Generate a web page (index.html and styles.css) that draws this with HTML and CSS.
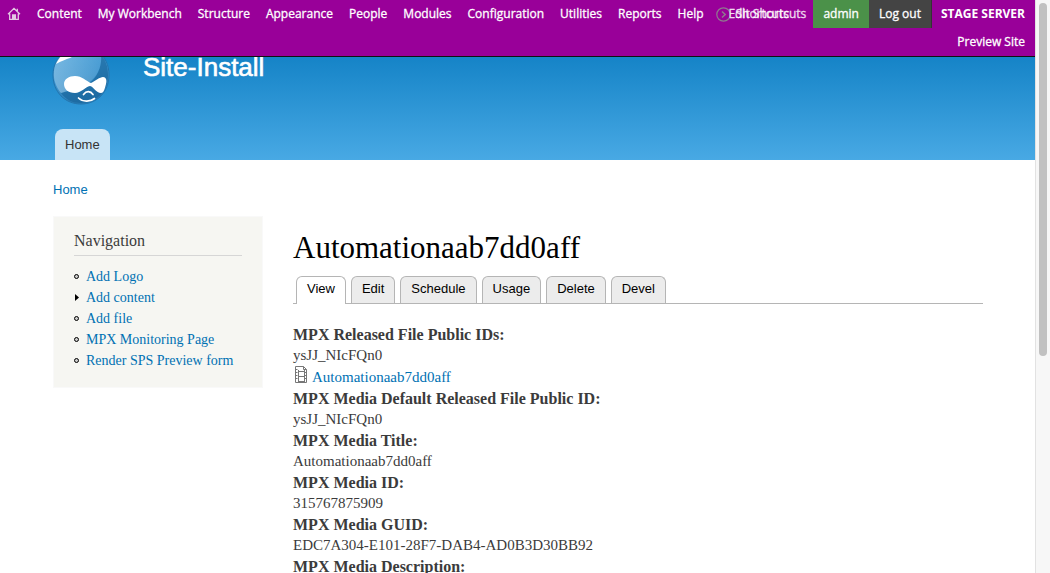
FILE: index.html
```html
<!DOCTYPE html>
<html lang="en">
<head>
<meta charset="utf-8">
<title>Automationaab7dd0aff | Site-Install</title>
<link rel="stylesheet" href="styles.css">
</head>
<body>
<div class="window">
  <div class="page">
    <nav class="toolbar" aria-label="Administration">
      <ul class="toolbar-menu">
        <li><a class="toolbar-home" href="#" aria-label="Administration home">
          <svg width="14" height="14" viewBox="0 0 14 14" fill="none" stroke="#e3c8e3" stroke-width="1.3"><path d="M1 7.2 7 1.4l6 5.800M2.700 6.500v5.800h8.600V6.500M10.300 4V1.700"/><path d="M5.600 12V8h2.800v4" fill="#e3c8e3"/></svg>
        </a></li>
        <li><a href="#">Content</a></li>
        <li><a href="#">My Workbench</a></li>
        <li><a href="#">Structure</a></li>
        <li><a href="#">Appearance</a></li>
        <li><a href="#">People</a></li>
        <li><a href="#">Modules</a></li>
        <li><a href="#">Configuration</a></li>
        <li><a href="#">Utilities</a></li>
        <li><a href="#">Reports</a></li>
        <li><a href="#">Help</a></li>
      </ul>
      <div class="shortcuts">
        <svg width="15" height="15" viewBox="0 0 15 15" fill="none" stroke="#8f7a8f" stroke-width="1.2"><circle cx="7.5" cy="7.5" r="6.7"/><path d="m6 4.500 3.200 3L6 10.500" stroke-width="1.5"/></svg>
        <a class="shortcuts-edit" href="#">Edit Shortcuts</a>
        <a class="shortcuts-toggle" href="#">Shortcuts</a>
      </div>
      <a class="account" href="#">admin</a>
      <a class="logout" href="#">Log out</a>
      <div class="environment">
        <strong>STAGE SERVER</strong>
        <a href="#">Preview Site</a>
      </div>
    </nav>

    <header class="header">
      <div class="branding">
        <a href="#" aria-label="Site home"><svg class="logo" width="58" height="67" viewBox="0 0 58 67">
          <defs>
            <linearGradient id="drop" x1="0" y1="0" x2=".3" y2="1"><stop offset=".2" stop-color="#5aaadd"/><stop offset=".65" stop-color="#3b94cf"/><stop offset="1" stop-color="#2a7db6"/></linearGradient>
            <linearGradient id="shine" x1="1" y1="0" x2="0" y2="1"><stop offset="0" stop-color="#fff" stop-opacity="0"/><stop offset="1" stop-color="#fff" stop-opacity=".32"/></linearGradient>
          </defs>
          <path d="M28 1c4 6 11 8 17 12 8 5 12 14 12 24 0 17-12 29-28 29S1 54 1 37c0-10 5-18 12-23C19 10 25 7 28 1Z" fill="url(#drop)" stroke="#2374ad"/>
          <path d="M49 17c1 9-2 19-9 26-7 6-17 9-31 12 5 7 12 10 20 10 16 0 27-12 27-28 0-8-2-15-7-20Z" fill="#166196" opacity=".6"/>
          <path d="M2 33c1-11 8-18 14-21 11-4 24-4 33 4 1 10-2 19-9 26-8 7-18 9-31 13-5-6-8-14-7-22Z" fill="url(#shine)"/>
          <path d="M4 26c3-6 7-11 12-13h10c-2 7-12 7-22 13Z" fill="#fff"/>
          <path d="M23 38c7 0 11 5 16 7 4-2 9-6 12-6 3 0 4 3 3 7s-2 9-5 9c-5 0-7-6-11-7-5 1-9 7-15 7-7 0-11-4-11-9s5-8 11-8Z" fill="#fff"/>
          <path d="M31.500 56.500c3-4 7-3.500 9.500 0M26.500 60c4 4 12 4 16 .5" fill="none" stroke="#fff" stroke-width="1.700" stroke-linecap="round"/>
        </svg></a>
        <a class="site-name" href="#">Site-Install</a>
      </div>
      <nav class="main-menu" aria-label="Main menu"><a href="#">Home</a></nav>
    </header>

    <div class="body-area">
      <nav class="breadcrumb" aria-label="Breadcrumb"><a href="#">Home</a></nav>
      <div class="columns">
        <aside class="sidebar">
          <h2>Navigation</h2>
          <ul class="nav-list">
            <li><a href="#">Add Logo</a></li>
            <li class="collapsed"><a href="#">Add content</a></li>
            <li><a href="#">Add file</a></li>
            <li><a href="#">MPX Monitoring Page</a></li>
            <li><a href="#">Render SPS Preview form</a></li>
          </ul>
        </aside>
        <main class="content">
          <h1>Automationaab7dd0aff</h1>
          <nav class="tabs" aria-label="Tabs">
            <a class="active" href="#">View</a>
            <a href="#">Edit</a>
            <a href="#">Schedule</a>
            <a href="#">Usage</a>
            <a href="#">Delete</a>
            <a href="#">Devel</a>
          </nav>
          <dl class="fields">
            <dt>MPX Released File Public IDs:</dt>
            <dd>ysJJ_NIcFQn0</dd>
            <dd class="file">
              <svg width="14" height="17" viewBox="0 0 14 17" fill="none" stroke="#777"><path d="M1.500.5h8l3 3v13h-11ZM9.500.5v3h3M4.500 4v12M10.500 4v12M4.500 5.500h6M4.500 10.500h6M4.500 15.500h6M1.500 3.500h2M1.500 6.500h2M1.500 9.500h2M1.500 12.500h2M10.500 6.500h2M10.500 9.500h2M10.500 12.500h2"/></svg>
              <a href="#">Automationaab7dd0aff</a>
            </dd>
            <dt>MPX Media Default Released File Public ID:</dt>
            <dd>ysJJ_NIcFQn0</dd>
            <dt>MPX Media Title:</dt>
            <dd>Automationaab7dd0aff</dd>
            <dt>MPX Media ID:</dt>
            <dd>315767875909</dd>
            <dt>MPX Media GUID:</dt>
            <dd>EDC7A304-E101-28F7-DAB4-AD0B3D30BB92</dd>
            <dt>MPX Media Description:</dt>
          </dl>
        </main>
      </div>
    </div>
  </div>
  <div class="scroll-track" aria-hidden="true"><div class="scroll-thumb"></div></div>
</div>
</body>
</html>
```
FILE: styles.css
```css
*, *::before { box-sizing: border-box; }

body {
  margin: 0;
  background: #fff;
  color: #3b3b3b;
  font-family: Georgia, "Liberation Serif", serif;
  font-size: 15px;
  line-height: 21px;
}

a { color: #0071b3; text-decoration: none; }
ul, dl, dd, h1, h2 { margin: 0; padding: 0; }
ul { list-style: none; }

.window { display: flex; height: 100vh; overflow: hidden; }
.page { position: relative; flex: 1; min-width: 0; overflow: hidden; }

/* Administration toolbar, laid over the top of the page */
.toolbar {
  position: absolute;
  inset: 0 0 auto;
  z-index: 1;
  display: flex;
  align-items: flex-start;
  min-height: 57px;
  background: #909;
  border-bottom: 1px solid #111;
  color: #fff;
  font: 12px/28px "Open Sans", sans-serif;
  -webkit-text-stroke: 0.3px;
  white-space: nowrap;
}
.toolbar a { color: #fff; }
.toolbar-menu { display: flex; flex: 1; }
.toolbar-menu a { display: block; padding: 0 8px; }
.toolbar-menu .toolbar-home { display: flex; align-items: center; height: 28px; padding: 0 8px 0 7px; }
.shortcuts { position: relative; display: flex; align-items: center; width: 97px; height: 28px; }
.toolbar .shortcuts a { position: absolute; top: 0; opacity: .85; }
.shortcuts-edit { left: 12px; }
.shortcuts-toggle { left: 19px; }
.account, .logout { padding: 0 10px; }
.account { background: #4b9149; }
.logout { background: #444; border-right: 1px solid #333; }
.environment { display: flex; flex-direction: column; align-items: flex-end; padding: 0 10px 0 9px; }
.environment strong { font-weight: 700; -webkit-text-stroke: 0; }

/* Header */
.header {
  display: flex;
  flex-direction: column;
  justify-content: space-between;
  height: 132px;
  margin-top: 28px;
  padding: 10px 52px 0;
  background: linear-gradient(#0779bf, #48a9e4);
}
.branding { display: flex; gap: 33px; }
.logo { display: block; }
.site-name {
  padding-top: 15px;
  color: #fff;
  font: 26px/28px "Liberation Sans", Arial, sans-serif;
  -webkit-text-stroke: 0.6px;
}
.main-menu { display: flex; padding-left: 3px; }
.main-menu a {
  padding: 0 10px;
  border-radius: 8px 8px 0 0;
  background: #c8e4f6;
  color: #333;
  font: 13px/31px "Liberation Sans", Arial, sans-serif;
}

/* Body */
.body-area { padding: 20px 52px 0 53px; }
.breadcrumb { font: 13px/20px "Liberation Sans", Arial, sans-serif; }
.columns { display: flex; align-items: flex-start; gap: 30px; padding-top: 16px; }
.sidebar {
  flex: 0 0 210px;
  padding: 13px 20px 16px;
  border: 1px solid #f9f9f9;
  background: #f6f6f2;
}
.sidebar h2 {
  padding-bottom: 4px;
  border-bottom: 1px solid #d6d6d6;
  font-size: 16px;
  font-weight: 400;
}
.nav-list { padding-top: 10px; }
.nav-list li { display: flex; align-items: center; gap: 7px; font-size: 14px; line-height: 21px; white-space: nowrap; }
.nav-list li::before {
  content: "";
  width: 5px;
  height: 5px;
  border: 1px solid #000;
  border-radius: 50%;
  background: #ccc;
}
.nav-list .collapsed::before {
  height: 7px;
  border: 0;
  border-radius: 0;
  background: #000;
  clip-path: polygon(20% 0, 100% 50%, 20% 100%);
}

.content { flex: 1; min-width: 0; padding-top: 16px; }
h1 { color: #000; font-size: 31px; font-weight: 400; line-height: 32px; }
.tabs {
  display: flex;
  gap: 5px;
  margin-top: 12px;
  padding-left: 3px;
  border-bottom: 1px solid #b5b5b5;
}
.tabs a {
  padding: 0 10px 2px;
  border: 1px solid #b5b5b5;
  border-bottom: 0;
  border-radius: 6px 6px 0 0;
  background: #ececec;
  color: #000;
  font: 13px/24px "Liberation Sans", Arial, sans-serif;
}
.tabs .active { margin-bottom: -1px; padding-bottom: 3px; background: #fff; }
.fields { padding-top: 20px; }
.fields dt { font-size: 16px; font-weight: 700; }
.file { display: flex; align-items: center; gap: 4px; line-height: 22px; }
.file svg { margin: 0 0 5px 1px; }

.scroll-track {
  flex: 0 0 15px;
  padding: 3px 3px 0;
  border-left: 1px solid #e2e2e2;
  background: #f7f7f7;
}
.scroll-thumb { width: 8px; height: 62%; border-radius: 4px; background: #c1c1c1; }
```
